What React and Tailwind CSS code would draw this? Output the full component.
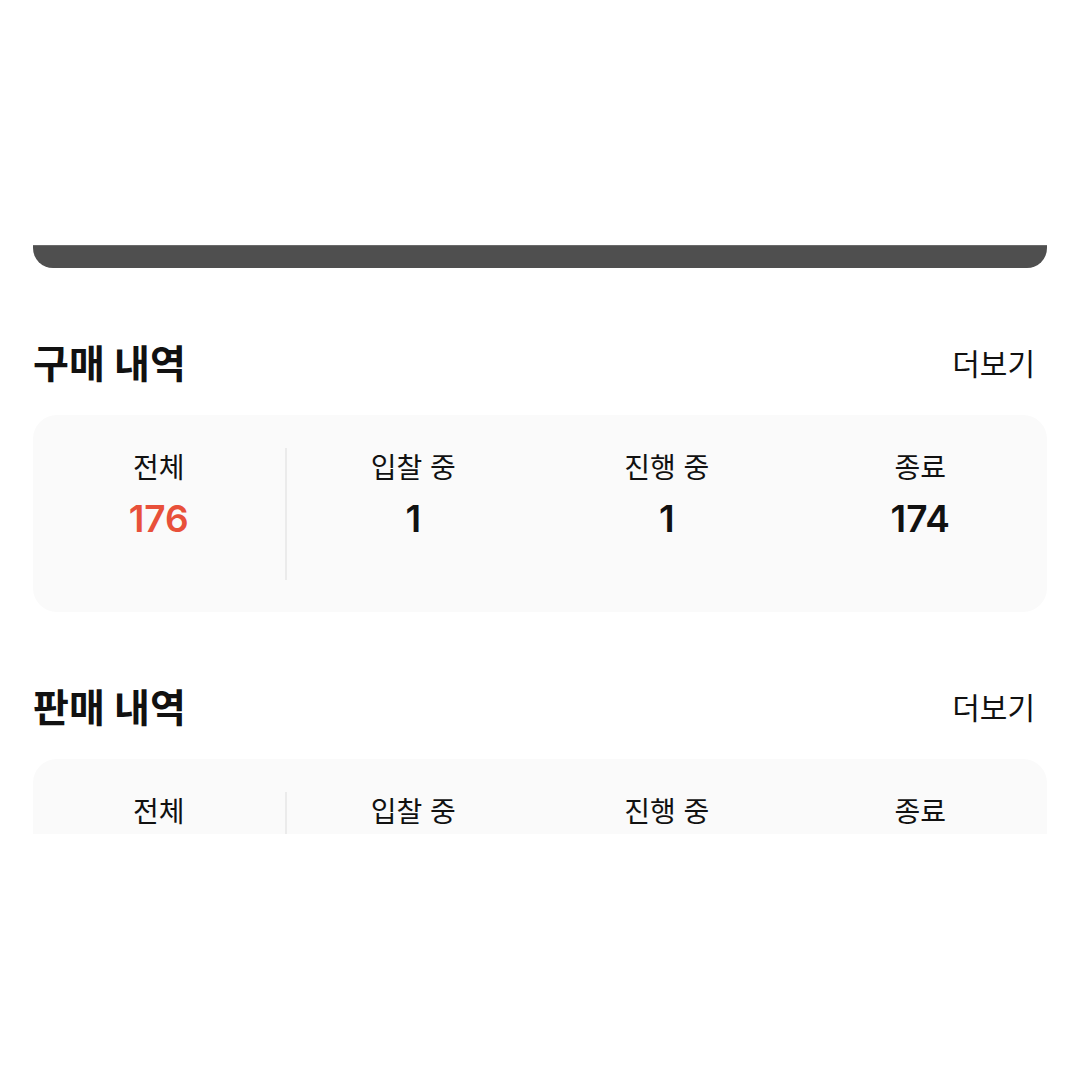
import React from 'react';

const font = { fontFamily: 'Inter, "Noto Sans CJK KR", sans-serif' };

const StatCard = ({ stats }) => (
  <div className="mt-[27px] mx-[33px] rounded-[24px] bg-[#fafafa] grid grid-cols-4 pt-[33px] pb-[32px]">
    {stats.map((s, i) => (
      <div
        key={s.label}
        className={
          i === 0
            ? 'flex flex-col items-center h-[132px] border-r-2 border-[#ebebeb]'
            : 'flex flex-col items-center h-[132px]'
        }
      >
        <span className="text-[28px] leading-[40px] text-[#111]">{s.label}</span>
        <span
          className={
            i === 0
              ? 'mt-[9px] text-[37px] leading-[44px] font-semibold text-[#e8503a]'
              : 'mt-[9px] text-[37px] leading-[44px] font-semibold text-[#111]'
          }
        >
          {s.value}
        </span>
      </div>
    ))}
  </div>
);

const Section = ({ title, stats }) => (
  <div className="mt-[72px]">
    <div className="flex items-center justify-between h-[48px] px-[33px]">
      <h2 className="text-[39px] font-bold text-[#111]">{title}</h2>
      <button className="text-[30px] text-[#111] pr-[12px]">더보기</button>
    </div>
    <StatCard stats={stats} />
  </div>
);

export default function App() {
  const stats = [
    { label: '전체', value: '176' },
    { label: '입찰 중', value: '1' },
    { label: '진행 중', value: '1' },
    { label: '종료', value: '174' },
  ];

  return (
    <div className="w-[1080px] h-[1080px] bg-white" style={font}>
      <div className="h-[834px] overflow-hidden">
        <div className="h-[245px]" />
        <div className="mx-[33px] h-[23px] rounded-b-[20px] bg-[#4f4f4f] border-t border-[#6a6a6a]" />
        <Section title="구매 내역" stats={stats} />
        <Section title="판매 내역" stats={stats} />
      </div>
    </div>
  );
}
